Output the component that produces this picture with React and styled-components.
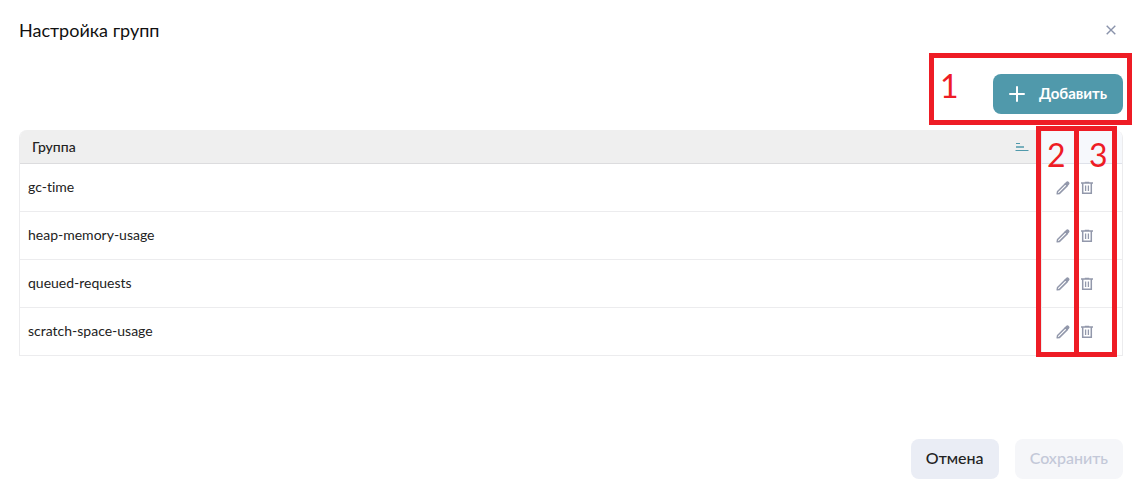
import styled, { createGlobalStyle } from 'styled-components';

const groups = ['gc-time', 'heap-memory-usage', 'queued-requests', 'scratch-space-usage'];

const PlusIcon = () => (
  <svg width="16" height="16" viewBox="0 0 16 16" fill="none" stroke="currentColor" strokeWidth="2" strokeLinecap="round" aria-hidden="true">
    <path d="M8 1v14M1 8h14" />
  </svg>
);

const CloseIcon = () => (
  <svg width="10" height="10" viewBox="0 0 10 10" fill="none" stroke="currentColor" strokeWidth="1.4" aria-hidden="true">
    <path d="M0.7 0.7l8.6 8.6M9.3 0.7L0.7 9.3" />
  </svg>
);

const SortIcon = () => (
  <svg width="14" height="10" viewBox="0 0 14 10" fill="none" stroke="currentColor" aria-hidden="true">
    <path d="M1 1.5h4M0.5 8.5h13" strokeWidth="1.2" />
    <path d="M1 5h8" strokeWidth="2" opacity="0.75" />
  </svg>
);

const PencilIcon = () => (
  <svg width="14" height="14" viewBox="0 0 14 14" fill="none" stroke="currentColor" strokeWidth="1.5" strokeLinejoin="round" aria-hidden="true">
    <path d="M1.2 12.8l0.4-2.3 7.8-7.8 1.9 1.9-7.8 7.8z" />
    <path d="M9.4 2.7l1.2-1.2c0.6-0.6 1.2-0.5 1.7 0s0.6 1.1 0 1.7l-1.2 1.2z" fill="currentColor" />
  </svg>
);

const TrashIcon = () => (
  <svg width="12" height="14" viewBox="0 0 12 14" fill="none" stroke="currentColor" strokeWidth="1.5" aria-hidden="true">
    <path d="M0 1.9h12M3.8 1.4h4.4M1.7 2v10.3h8.6V2" />
    <path d="M4.6 4.4v5.6M7.4 4.4v5.6" strokeWidth="1.3" />
  </svg>
);

const App = () => {
  return (
    <>
      <GlobalStyle />
      <StModal>
        <StHeader>
          <StTitle>Настройка групп</StTitle>
          <StCloseButton type="button" aria-label="Закрыть">
            <CloseIcon />
          </StCloseButton>
        </StHeader>
        <StToolbar>
          <StAddButton type="button">
            <PlusIcon />
            <StLabel>Добавить</StLabel>
          </StAddButton>
          <StToolbarMark>1</StToolbarMark>
        </StToolbar>
        <StTableWrap>
          <StTable>
            <thead>
              <tr>
                <StTh>
                  <StThInner>
                    Группа
                    <StSortButton type="button" aria-label="Сортировать">
                      <SortIcon />
                    </StSortButton>
                  </StThInner>
                </StTh>
                <StActionTh aria-label="Действия" />
              </tr>
            </thead>
            <tbody>
              {groups.map((name) => (
                <tr key={name}>
                  <StTd>{name}</StTd>
                  <StActionTd>
                    <StActions>
                      <StIconButton type="button" aria-label={`Изменить ${name}`}>
                        <PencilIcon />
                      </StIconButton>
                      <StIconButton type="button" aria-label={`Удалить ${name}`}>
                        <TrashIcon />
                      </StIconButton>
                    </StActions>
                  </StActionTd>
                </tr>
              ))}
            </tbody>
          </StTable>
          <StColumnMark $right={44} $indent={6}>2</StColumnMark>
          <StColumnMark $right={6} $indent={10}>3</StColumnMark>
        </StTableWrap>
        <StFooter>
          <StButton type="button">
            <StLabel>Отмена</StLabel>
          </StButton>
          <StButton type="button" disabled>
            <StLabel>Сохранить</StLabel>
          </StButton>
        </StFooter>
      </StModal>
    </>
  );
};

export default App;

const GlobalStyle = createGlobalStyle`
  * {
    box-sizing: border-box;
  }

  body {
    margin: 0;
    background-color: #fff;
    color: #222;
    font-family: Lato, 'Open Sans', sans-serif;
    font-variant-ligatures: none;
  }

  button {
    border: none;
    padding: 0;
    background: none;
    font-family: inherit;
    cursor: pointer;
  }
`;

const StModal = styled.div`
  display: flex;
  flex-direction: column;
  padding: 18px 20px 18px 19px;
`;

const StHeader = styled.header`
  display: flex;
  justify-content: space-between;
  align-items: center;
  height: 24px;
  padding-right: 7px;
`;

const StTitle = styled.h1`
  margin: 0;
  font-size: 18px;
  font-weight: 400;
  line-height: 24px;
  color: #111;
`;

const StCloseButton = styled.button`
  display: flex;
  color: #8a93ab;
`;

const StToolbar = styled.div`
  position: relative;
  display: flex;
  justify-content: flex-end;
  margin: 32px 0 16px;
`;

const StButton = styled.button`
  display: flex;
  align-items: center;
  height: 40px;
  padding: 0 15px;
  border-radius: 8px;
  background-color: #eaedf5;
  color: #222;
  font-size: 16px;
  font-weight: 500;
  line-height: 20px;

  &:disabled {
    background-color: #f5f6f9;
    color: #c3c8d8;
    cursor: default;
  }
`;

const StAddButton = styled(StButton)`
  gap: 14px;
  padding: 0 16px;
  background-color: #5099ab;
  color: #fff;
  font-size: 15px;
  font-weight: 700;
`;

const StLabel = styled.span`
  padding-bottom: 2px;
`;

const StMark = styled.span`
  position: absolute;
  border: 5px solid #ee1c25;
  color: #ee1c25;
  font-size: 32px;
  line-height: 40px;
  pointer-events: none;
`;

const StToolbarMark = styled(StMark)`
  top: -21px;
  right: -9px;
  width: 203px;
  height: 72px;
  padding: 8px 6px;
`;

const StColumnMark = styled(StMark)`
  top: -4px;
  bottom: -1px;
  right: ${({ $right }) => $right}px;
  width: 43px;
  padding: 4px 0 0 ${({ $indent }) => $indent}px;
`;

const StTableWrap = styled.div`
  position: relative;
`;

const StTable = styled.table`
  width: 100%;
  table-layout: fixed;
  border-collapse: separate;
  border-spacing: 0;
  border: solid #ececee;
  border-width: 0 1px;
  border-radius: 8px 8px 0 0;
  overflow: hidden;
  font-size: 14px;
`;

const StTh = styled.th`
  height: 34px;
  padding: 0 12px;
  border-bottom: 1px solid #dcdcde;
  background-color: #efefef;
  font-weight: 500;
  text-align: left;
`;

const StThInner = styled.div`
  display: flex;
  justify-content: space-between;
  align-items: center;
`;

const StSortButton = styled.button`
  display: flex;
  color: #5099ab;
`;

const StActionTh = styled.th`
  width: 81px;
  padding: 0;
  border-left: 1px solid #e6e8ee;
  border-bottom: 1px solid #dfe2ea;
  background-color: #f6f8fc;
`;

const StTd = styled.td`
  height: 48px;
  padding: 0 8px 2px;
  border-bottom: 1px solid #ececee;
`;

const StActionTd = styled(StTd)`
  padding: 0 14px;
  border-left: 1px solid #ececee;
`;

const StActions = styled.div`
  display: flex;
  align-items: center;
  gap: 11px;
`;

const StIconButton = styled.button`
  display: flex;
  color: #9298ab;
`;

const StFooter = styled.footer`
  display: flex;
  justify-content: flex-end;
  gap: 16px;
  margin-top: 83px;
`;
